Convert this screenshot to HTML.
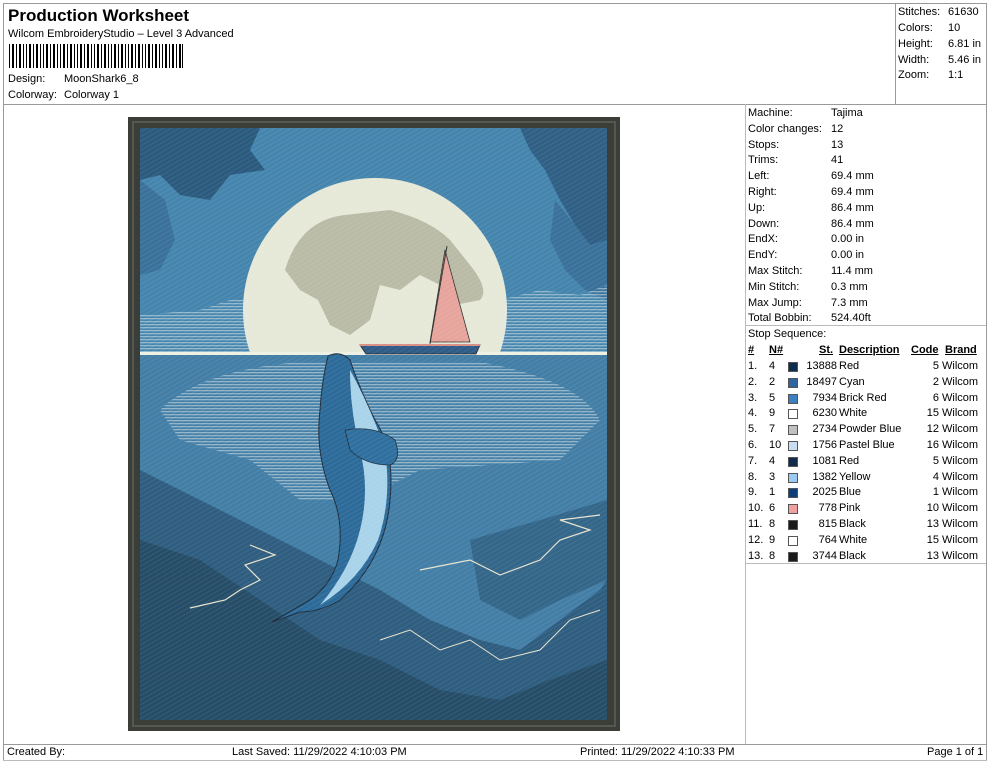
<!DOCTYPE html>
<html><head><meta charset="utf-8"><style>
*{margin:0;padding:0;box-sizing:border-box}
body{width:990px;height:762px;background:#fff;position:relative;overflow:hidden;font-family:"Liberation Sans",Arial,sans-serif;font-size:11px;color:#000}
.a{position:absolute;white-space:nowrap}
.ln{position:absolute;background:#999}
.r{position:absolute;line-height:15.8px;height:15.8px;white-space:nowrap}
.sw{position:absolute;width:10px;height:10px;border:1px solid #555;top:3px}
u{text-decoration:underline}
</style></head><body>
<div class="ln" style="left:3px;top:3px;width:984px;height:1px"></div>
<div class="ln" style="left:3px;top:3px;width:1px;height:758px"></div>
<div class="ln" style="left:986px;top:3px;width:1px;height:758px"></div>
<div class="ln" style="left:3px;top:104px;width:984px;height:1px"></div>
<div class="ln" style="left:895px;top:3px;width:1px;height:101px"></div>
<div class="ln" style="left:745px;top:104px;width:1px;height:640px;background:#bbb"></div>
<div class="ln" style="left:745px;top:325px;width:241px;height:1px;background:#bbb"></div>
<div class="ln" style="left:745px;top:563px;width:241px;height:1px;background:#bbb"></div>
<div class="ln" style="left:3px;top:744px;width:984px;height:1px"></div>
<div class="ln" style="left:3px;top:760px;width:984px;height:1px;background:#bbb"></div>

<div class="a" style="left:8px;top:6px;font-size:17px;font-weight:bold">Production Worksheet</div>
<div class="a" style="left:8px;top:28px">Wilcom EmbroideryStudio – Level 3 Advanced</div>
<svg class="a" style="left:9px;top:44px" width="175" height="24">
<g fill="#000">
<rect x="0" width="1" height="24"/><rect x="3" width="2" height="24"/><rect x="7" width="1" height="24"/><rect x="10" width="2" height="24"/><rect x="14" width="1" height="24"/><rect x="17" width="1" height="24"/><rect x="20" width="2" height="24"/><rect x="24" width="1" height="24"/><rect x="27" width="2" height="24"/><rect x="31" width="1" height="24"/><rect x="34" width="1" height="24"/><rect x="37" width="2" height="24"/><rect x="41" width="1" height="24"/><rect x="44" width="2" height="24"/><rect x="48" width="1" height="24"/><rect x="51" width="1" height="24"/><rect x="54" width="2" height="24"/><rect x="58" width="1" height="24"/><rect x="61" width="2" height="24"/><rect x="65" width="1" height="24"/><rect x="68" width="1" height="24"/><rect x="71" width="2" height="24"/><rect x="75" width="1" height="24"/><rect x="78" width="2" height="24"/><rect x="82" width="1" height="24"/><rect x="85" width="1" height="24"/><rect x="88" width="2" height="24"/><rect x="92" width="1" height="24"/><rect x="95" width="2" height="24"/><rect x="99" width="1" height="24"/><rect x="102" width="1" height="24"/><rect x="105" width="2" height="24"/><rect x="109" width="1" height="24"/><rect x="112" width="2" height="24"/><rect x="116" width="1" height="24"/><rect x="119" width="1" height="24"/><rect x="122" width="2" height="24"/><rect x="126" width="1" height="24"/><rect x="129" width="2" height="24"/><rect x="133" width="1" height="24"/><rect x="136" width="1" height="24"/><rect x="139" width="2" height="24"/><rect x="143" width="1" height="24"/><rect x="146" width="2" height="24"/><rect x="150" width="1" height="24"/><rect x="153" width="1" height="24"/><rect x="156" width="2" height="24"/><rect x="160" width="1" height="24"/><rect x="163" width="2" height="24"/><rect x="167" width="1" height="24"/><rect x="170" width="2" height="24"/><rect x="173" width="1" height="24"/>
</g></svg>
<div class="a" style="left:8px;top:73px">Design:</div><div class="a" style="left:64px;top:73px">MoonShark6_8</div>
<div class="a" style="left:8px;top:89px">Colorway:</div><div class="a" style="left:64px;top:89px">Colorway 1</div>

<div class="r" style="left:898px;top:5px">Stitches:</div><div class="r" style="left:948px;top:5px">61630</div>
<div class="r" style="left:898px;top:21px">Colors:</div><div class="r" style="left:948px;top:21px">10</div>
<div class="r" style="left:898px;top:37px">Height:</div><div class="r" style="left:948px;top:37px">6.81 in</div>
<div class="r" style="left:898px;top:53px">Width:</div><div class="r" style="left:948px;top:53px">5.46 in</div>
<div class="r" style="left:898px;top:68px">Zoom:</div><div class="r" style="left:948px;top:68px">1:1</div>

<div style="position:absolute;left:748px;top:106px">
<div class="r" style="top:0">Machine:</div><div class="r" style="left:83px;top:0">Tajima</div>
<div class="r" style="top:15.8px">Color changes:</div><div class="r" style="left:83px;top:15.8px">12</div>
<div class="r" style="top:31.6px">Stops:</div><div class="r" style="left:83px;top:31.6px">13</div>
<div class="r" style="top:47.4px">Trims:</div><div class="r" style="left:83px;top:47.4px">41</div>
<div class="r" style="top:63.2px">Left:</div><div class="r" style="left:83px;top:63.2px">69.4 mm</div>
<div class="r" style="top:79px">Right:</div><div class="r" style="left:83px;top:79px">69.4 mm</div>
<div class="r" style="top:94.8px">Up:</div><div class="r" style="left:83px;top:94.8px">86.4 mm</div>
<div class="r" style="top:110.6px">Down:</div><div class="r" style="left:83px;top:110.6px">86.4 mm</div>
<div class="r" style="top:126.4px">EndX:</div><div class="r" style="left:83px;top:126.4px">0.00 in</div>
<div class="r" style="top:142.2px">EndY:</div><div class="r" style="left:83px;top:142.2px">0.00 in</div>
<div class="r" style="top:158px">Max Stitch:</div><div class="r" style="left:83px;top:158px">11.4 mm</div>
<div class="r" style="top:173.8px">Min Stitch:</div><div class="r" style="left:83px;top:173.8px">0.3 mm</div>
<div class="r" style="top:189.6px">Max Jump:</div><div class="r" style="left:83px;top:189.6px">7.3 mm</div>
<div class="r" style="top:205.4px">Total Bobbin:</div><div class="r" style="left:83px;top:205.4px">524.40ft</div>
<div class="r" style="top:221.2px">Stop Sequence:</div>
</div>

<div style="position:absolute;left:748px;top:343px;width:238px">
<div class="r" style="top:0"><b><u>#</u></b></div>
<div class="r" style="left:21px;top:0"><b><u>N#</u></b></div>
<div class="r" style="left:71px;top:0"><b><u>St.</u></b></div>
<div class="r" style="left:91px;top:0"><b><u>Description</u></b></div>
<div class="r" style="left:163px;top:0"><b><u>Code</u></b></div>
<div class="r" style="left:197px;top:0"><b><u>Brand</u></b></div>
</div>

<svg class="a" style="left:0;top:0" width="990" height="762">
<defs>
<pattern id="st" width="4" height="4" patternUnits="userSpaceOnUse" patternTransform="rotate(-30)"><rect width="4" height="1.2" fill="#fff" opacity="0.07"/></pattern>
<pattern id="hx" width="6" height="3" patternUnits="userSpaceOnUse"><rect width="6" height="1.3" fill="#dfe9ec" opacity="0.5"/></pattern>
<clipPath id="cl"><rect x="140" y="128" width="467" height="592"/></clipPath>
</defs>
<rect x="128" y="117" width="492" height="614" fill="#3b3d38"/>
<rect x="133" y="122" width="482" height="604" fill="none" stroke="#55584f" stroke-width="2"/>
<g clip-path="url(#cl)">
<rect x="140" y="128" width="467" height="592" fill="#4585ad"/>
<path d="M140 128 H260 L250 150 265 170 230 175 210 200 180 195 160 175 140 180Z" fill="#2a5a7e"/>
<path d="M520 128 H607 V240 L590 245 575 225 560 200 545 170 530 150Z" fill="#2f5f84"/>
<path d="M140 180 L165 200 175 240 160 270 140 275Z" fill="#3a719a"/>
<path d="M555 200 L575 225 590 245 607 240 V300 L585 290 565 270 550 240Z" fill="#3a719a"/>
<circle cx="375" cy="310" r="132" fill="#e6e9d8"/>
<path d="M285 270 Q300 220 345 215 L390 210 Q430 220 450 240 L470 265 Q490 290 480 300 L455 305 440 285 420 275 400 290 380 285 370 320 350 335 330 325 318 300 300 290 Z" fill="#b9bba6"/>
<path d="M140 315 L200 310 230 300 250 300 250 353 140 353Z" fill="url(#hx)"/>
<path d="M500 300 L540 290 580 295 607 285 V353 H500Z" fill="url(#hx)"/>
<rect x="140" y="353" width="467" height="367" fill="#437ea6"/>
<path d="M160 410 Q200 370 300 362 L480 362 Q580 380 600 420 L560 460 420 470 360 500 300 500 250 460 180 440Z" fill="url(#hx)"/>
<path d="M140 470 L180 490 240 520 320 560 380 590 430 620 480 640 520 650 560 620 600 590 607 580 V720 H140Z" fill="#2e5d7f"/>
<path d="M140 540 L200 560 260 600 320 640 380 660 440 690 500 700 550 680 607 660 V720 H140Z" fill="#264d68"/>
<path d="M470 540 L540 520 607 500 V580 L560 600 520 620 480 600Z" fill="#336689"/>
<rect x="140" y="352" width="467" height="3" fill="#eef0e4"/>
<path d="M360 345 H480 L476 354 H366Z" fill="#2e5a86" stroke="#222" stroke-width="0.8"/>
<rect x="360" y="344" width="120" height="2" fill="#d98f86"/>
<path d="M445 250 L430 342 H470Z" fill="#e6a49c" stroke="#333" stroke-width="0.8"/>
<line x1="447" y1="246" x2="430" y2="344" stroke="#333" stroke-width="1"/>
<path d="M328 356 Q340 350 350 360 Q360 390 375 420 Q395 450 390 500 Q385 560 340 600 Q320 612 300 612 L272 622 L300 606 Q330 590 338 560 Q345 520 330 490 Q315 450 320 410 Q322 380 328 356Z" fill="#2c6a99" stroke="#1e2d3a" stroke-width="1"/>
<path d="M350 370 Q372 410 385 450 Q392 500 378 540 Q360 580 320 605 Q350 570 360 530 Q370 490 360 450 Q350 410 350 370Z" fill="#a8d3ea"/>
<path d="M345 430 Q375 425 395 440 Q402 460 390 465 Q365 465 350 450Z" fill="#2f6f9f" stroke="#1e2d3a" stroke-width="0.8"/>
<path d="M190 608 L225 600 240 590 260 580 245 565 275 555 L250 545 M420 570 L470 560 500 575 540 560 560 540 590 530 560 520 600 515" fill="none" stroke="#e8e4d0" stroke-width="1.2"/>
<path d="M380 640 L410 630 440 650 470 640 500 660 540 650 570 620 600 610" fill="none" stroke="#e8e4d0" stroke-width="1"/>
<rect x="140" y="128" width="467" height="592" fill="url(#st)"/>
</g>
</svg>

<div class="a" style="left:7px;top:746px">Created By:</div>
<div class="a" style="left:232px;top:746px">Last Saved: 11/29/2022 4:10:03 PM</div>
<div class="a" style="left:580px;top:746px">Printed: 11/29/2022 4:10:33 PM</div>
<div class="a" style="left:927px;top:746px">Page 1 of 1</div>

<div style="position:absolute;left:748px;top:359px;width:238px">
<div class="r" style="top:0">1.</div><div class="r" style="left:21px;top:0">4</div><div class="sw" style="left:40px;top:3px;background:#0f2c4c"></div><div class="r" style="left:53px;top:0;width:36px;text-align:right">13888</div><div class="r" style="left:91px;top:0">Red</div><div class="r" style="left:163px;top:0;width:28px;text-align:right">5</div><div class="r" style="left:194px;top:0">Wilcom</div>
<div class="r" style="top:15.8px">2.</div><div class="r" style="left:21px;top:15.8px">2</div><div class="sw" style="left:40px;top:18.8px;background:#2f64a0"></div><div class="r" style="left:53px;top:15.8px;width:36px;text-align:right">18497</div><div class="r" style="left:91px;top:15.8px">Cyan</div><div class="r" style="left:163px;top:15.8px;width:28px;text-align:right">2</div><div class="r" style="left:194px;top:15.8px">Wilcom</div>
<div class="r" style="top:31.6px">3.</div><div class="r" style="left:21px;top:31.6px">5</div><div class="sw" style="left:40px;top:34.6px;background:#3c7fc0"></div><div class="r" style="left:53px;top:31.6px;width:36px;text-align:right">7934</div><div class="r" style="left:91px;top:31.6px">Brick Red</div><div class="r" style="left:163px;top:31.6px;width:28px;text-align:right">6</div><div class="r" style="left:194px;top:31.6px">Wilcom</div>
<div class="r" style="top:47.4px">4.</div><div class="r" style="left:21px;top:47.4px">9</div><div class="sw" style="left:40px;top:50.4px;background:#fff"></div><div class="r" style="left:53px;top:47.4px;width:36px;text-align:right">6230</div><div class="r" style="left:91px;top:47.4px">White</div><div class="r" style="left:163px;top:47.4px;width:28px;text-align:right">15</div><div class="r" style="left:194px;top:47.4px">Wilcom</div>
<div class="r" style="top:63.2px">5.</div><div class="r" style="left:21px;top:63.2px">7</div><div class="sw" style="left:40px;top:66.2px;background:#c0c0c0"></div><div class="r" style="left:53px;top:63.2px;width:36px;text-align:right">2734</div><div class="r" style="left:91px;top:63.2px">Powder Blue</div><div class="r" style="left:163px;top:63.2px;width:28px;text-align:right">12</div><div class="r" style="left:194px;top:63.2px">Wilcom</div>
<div class="r" style="top:79px">6.</div><div class="r" style="left:21px;top:79px">10</div><div class="sw" style="left:40px;top:82px;background:#c8dcf4"></div><div class="r" style="left:53px;top:79px;width:36px;text-align:right">1756</div><div class="r" style="left:91px;top:79px">Pastel Blue</div><div class="r" style="left:163px;top:79px;width:28px;text-align:right">16</div><div class="r" style="left:194px;top:79px">Wilcom</div>
<div class="r" style="top:94.8px">7.</div><div class="r" style="left:21px;top:94.8px">4</div><div class="sw" style="left:40px;top:97.8px;background:#0f2c4c"></div><div class="r" style="left:53px;top:94.8px;width:36px;text-align:right">1081</div><div class="r" style="left:91px;top:94.8px">Red</div><div class="r" style="left:163px;top:94.8px;width:28px;text-align:right">5</div><div class="r" style="left:194px;top:94.8px">Wilcom</div>
<div class="r" style="top:110.6px">8.</div><div class="r" style="left:21px;top:110.6px">3</div><div class="sw" style="left:40px;top:113.6px;background:#9ccaf2"></div><div class="r" style="left:53px;top:110.6px;width:36px;text-align:right">1382</div><div class="r" style="left:91px;top:110.6px">Yellow</div><div class="r" style="left:163px;top:110.6px;width:28px;text-align:right">4</div><div class="r" style="left:194px;top:110.6px">Wilcom</div>
<div class="r" style="top:126.4px">9.</div><div class="r" style="left:21px;top:126.4px">1</div><div class="sw" style="left:40px;top:129.4px;background:#0e3e78"></div><div class="r" style="left:53px;top:126.4px;width:36px;text-align:right">2025</div><div class="r" style="left:91px;top:126.4px">Blue</div><div class="r" style="left:163px;top:126.4px;width:28px;text-align:right">1</div><div class="r" style="left:194px;top:126.4px">Wilcom</div>
<div class="r" style="top:142.2px">10.</div><div class="r" style="left:21px;top:142.2px">6</div><div class="sw" style="left:40px;top:145.2px;background:#f0a0a0"></div><div class="r" style="left:53px;top:142.2px;width:36px;text-align:right">778</div><div class="r" style="left:91px;top:142.2px">Pink</div><div class="r" style="left:163px;top:142.2px;width:28px;text-align:right">10</div><div class="r" style="left:194px;top:142.2px">Wilcom</div>
<div class="r" style="top:158px">11.</div><div class="r" style="left:21px;top:158px">8</div><div class="sw" style="left:40px;top:161px;background:#1a1a1a"></div><div class="r" style="left:53px;top:158px;width:36px;text-align:right">815</div><div class="r" style="left:91px;top:158px">Black</div><div class="r" style="left:163px;top:158px;width:28px;text-align:right">13</div><div class="r" style="left:194px;top:158px">Wilcom</div>
<div class="r" style="top:173.8px">12.</div><div class="r" style="left:21px;top:173.8px">9</div><div class="sw" style="left:40px;top:176.8px;background:#fff"></div><div class="r" style="left:53px;top:173.8px;width:36px;text-align:right">764</div><div class="r" style="left:91px;top:173.8px">White</div><div class="r" style="left:163px;top:173.8px;width:28px;text-align:right">15</div><div class="r" style="left:194px;top:173.8px">Wilcom</div>
<div class="r" style="top:189.6px">13.</div><div class="r" style="left:21px;top:189.6px">8</div><div class="sw" style="left:40px;top:192.6px;background:#1a1a1a"></div><div class="r" style="left:53px;top:189.6px;width:36px;text-align:right">3744</div><div class="r" style="left:91px;top:189.6px">Black</div><div class="r" style="left:163px;top:189.6px;width:28px;text-align:right">13</div><div class="r" style="left:194px;top:189.6px">Wilcom</div>
</div>
</body></html>
